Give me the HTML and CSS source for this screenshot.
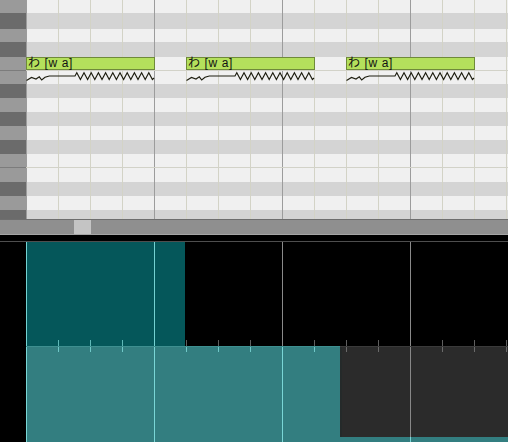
FILE: index.html
```html
<!DOCTYPE html>
<html lang="ja">
<head>
<meta charset="utf-8">
<title>Piano roll</title>
<link rel="stylesheet" href="styles.css">
</head>
<body>
<div class="app">
  <div class="roll">
    <div class="keys">
      <div class="key w"></div>
      <div class="key b"></div>
      <div class="key w"></div>
      <div class="key b"></div>
      <div class="key w"></div>
      <div class="key w split"></div>
      <div class="key b"></div>
      <div class="key w"></div>
      <div class="key b"></div>
      <div class="key w"></div>
      <div class="key b"></div>
      <div class="key w"></div>
      <div class="key w split"></div>
      <div class="key b"></div>
      <div class="key w"></div>
      <div class="key b"></div>
    </div>
    <div class="grid">
      <div class="row w"></div>
      <div class="row b"></div>
      <div class="row w"></div>
      <div class="row b"></div>
      <div class="row w"></div>
      <div class="row w split"></div>
      <div class="row b"></div>
      <div class="row w"></div>
      <div class="row b"></div>
      <div class="row w"></div>
      <div class="row b"></div>
      <div class="row w"></div>
      <div class="row w split"></div>
      <div class="row b"></div>
      <div class="row w"></div>
      <div class="row b"></div>

      <div class="note n1">わ [w a]</div>
      <svg class="pitch n1" width="130" height="14" viewBox="0 0 130 14"><path d="M0.5,10.5 L5.5,7.5 L10,9 L13.3,6.8 L15.7,10 L19,7.3 L23.3,6 L49,6 L50.8,2.7 L54.4,9.5 L58,2.7 L61.6,9.5 L65.2,2.7 L68.8,9.5 L72.4,2.7 L76,9.5 L79.6,2.7 L83.2,9.5 L86.8,2.7 L90.4,9.5 L94,2.7 L97.6,9.5 L101.2,2.7 L104.8,9.5 L108.4,2.7 L112,9.5 L115.6,2.7 L119.2,9.5 L122.8,2.7 L126.4,9.5 L128,8"/></svg>

      <div class="note n2">わ [w a]</div>
      <svg class="pitch n2" width="130" height="14" viewBox="0 0 130 14"><path d="M0.5,10.5 L5.5,7.5 L10,9 L13.3,6.8 L15.7,10 L19,7.3 L23.3,6 L49,6 L50.8,2.7 L54.4,9.5 L58,2.7 L61.6,9.5 L65.2,2.7 L68.8,9.5 L72.4,2.7 L76,9.5 L79.6,2.7 L83.2,9.5 L86.8,2.7 L90.4,9.5 L94,2.7 L97.6,9.5 L101.2,2.7 L104.8,9.5 L108.4,2.7 L112,9.5 L115.6,2.7 L119.2,9.5 L122.8,2.7 L126.4,9.5 L128,8"/></svg>

      <div class="note n3">わ [w a]</div>
      <svg class="pitch n3" width="130" height="14" viewBox="0 0 130 14"><path d="M0.5,10.5 L5.5,7.5 L10,9 L13.3,6.8 L15.7,10 L19,7.3 L23.3,6 L49,6 L50.8,2.7 L54.4,9.5 L58,2.7 L61.6,9.5 L65.2,2.7 L68.8,9.5 L72.4,2.7 L76,9.5 L79.6,2.7 L83.2,9.5 L86.8,2.7 L90.4,9.5 L94,2.7 L97.6,9.5 L101.2,2.7 L104.8,9.5 L108.4,2.7 L112,9.5 L115.6,2.7 L119.2,9.5 L122.8,2.7 L126.4,9.5 L128,8"/></svg>
    </div>
  </div>

  <div class="hscroll"><div class="thumb"></div></div>
  <div class="gap"></div>

  <div class="panel">
    <div class="band upper">
      <div class="side"></div>
      <div class="box dark-teal"></div>
      <div class="box void"></div>
    </div>
    <div class="band lower">
      <div class="side"></div>
      <div class="box teal"></div>
      <div class="stack">
        <div class="box shade"></div>
        <div class="box strip"></div>
      </div>
    </div>
  </div>
</div>
</body>
</html>
```

FILE: styles.css
```css
* {
  box-sizing: border-box;
  margin: 0;
  padding: 0;
}

html,
body {
  width: 508px;
  height: 442px;
  overflow: hidden;
  background: #000;
}

body {
  font-family: "Liberation Sans", "Noto Sans CJK JP", sans-serif;
}

.app {
  display: flex;
  flex-direction: column;
  width: 508px;
  height: 442px;
}

/* ---------- piano roll ---------- */
.roll {
  --rows: 13px 16px 13px 15px 13px 14px 14px 14px 14px 14px 14px 13px 15px 14px 14px 9px;
  display: flex;
  height: 219px;
  flex: none;
}

.keys {
  width: 26px;
  flex: none;
  display: grid;
  grid-template-rows: var(--rows);
}

.key.w {
  background: #9a9a9a;
}

.key.b {
  background: #6b6b6b;
}

.key.split {
  border-top: 1px solid #7c7c7c;
}

.grid {
  flex: 1;
  position: relative;
  display: grid;
  grid-template-rows: var(--rows);
}

.row {
  background-image:
    linear-gradient(to right, #9c9c9c 0 1px, transparent 1px),
    linear-gradient(to right, #d3d3c6 0 1px, transparent 1px);
  background-size: 128px 100%, 32px 100%;
  background-repeat: repeat-x;
}

.row.w {
  background-color: #f0f0f0;
}

.row.b {
  background-color: #d4d4d4;
}

.row.split {
  border-top: 1px solid #d2d2c8;
}

.note {
  position: absolute;
  top: 57px;
  width: 129px;
  height: 13px;
  background: #b4e05c;
  border: 1px solid #6f8a3a;
  font-size: 12px;
  line-height: 11px;
  letter-spacing: 0.6px;
  color: #111;
  padding-left: 1px;
  white-space: nowrap;
}

.pitch {
  position: absolute;
  top: 70px;
  fill: none;
  stroke: #1e1e10;
  stroke-width: 1.15;
}

.n1 {
  left: 0;
}

.n2 {
  left: 160px;
}

.n3 {
  left: 320px;
}

/* ---------- scrollbar ---------- */
.hscroll {
  flex: none;
  height: 16px;
  background: #8f8f8f;
  border-top: 1px solid #6e6e6e;
  border-bottom: 1px solid #a6a6a6;
  padding-left: 74px;
}

.thumb {
  width: 17px;
  height: 100%;
  background: #c4c4c4;
}

.gap {
  flex: none;
  height: 6px;
}

/* ---------- lower panel ---------- */
.panel {
  flex: none;
  height: 201px;
  border-top: 1px solid #4e4e4e;
  display: flex;
  flex-direction: column;
}

.band {
  display: flex;
}

.upper {
  height: 104px;
}

.lower {
  height: 96px;
}

.side {
  width: 26px;
  flex: none;
}

.box {
  background-repeat: repeat-x;
}

.dark-teal {
  width: 159px;
  flex: none;
  background-color: #05575a;
  background-image:
    linear-gradient(to right, #74d2d2 0 1px, transparent 1px),
    linear-gradient(to right, #5fb8b8 0 1px, transparent 1px);
  background-size: 128px 100%, 32px 6px;
  background-position: 0 0, 0 bottom;
}

.void {
  flex: 1;
  background-color: #000;
  background-image:
    linear-gradient(to right, #8a8a8a 0 1px, transparent 1px),
    linear-gradient(to right, #5e5e5e 0 1px, transparent 1px);
  background-size: 128px 100%, 32px 6px;
  background-position: 97px 0, 1px bottom;
}

.teal {
  width: 314px;
  flex: none;
  background-color: #337e80;
  background-image:
    linear-gradient(to right, #7ad6d6 0 1px, transparent 1px),
    linear-gradient(to right, #70c8c8 0 1px, transparent 1px);
  background-size: 128px 100%, 32px 6px;
  background-position: 0 0, 0 0;
  box-shadow: inset 0 1px 0 #3e8f90;
}

.stack {
  flex: 1;
  display: flex;
  flex-direction: column;
}

.shade {
  height: 91px;
  flex: none;
  background-color: #2b2b2b;
  background-image:
    linear-gradient(to right, #888888 0 1px, transparent 1px),
    linear-gradient(to right, #6a6a6a 0 1px, transparent 1px);
  background-size: 128px 100%, 32px 6px;
  background-position: 70px 0, 6px 0;
  box-shadow: inset 0 1px 0 #3a3a3a, inset 2px 0 0 #252a2a;
}

.strip {
  flex: 1;
  background-color: #337e80;
  background-image: linear-gradient(to right, #7ad6d6 0 1px, transparent 1px);
  background-size: 128px 100%;
  background-position: 70px 0;
}
```
